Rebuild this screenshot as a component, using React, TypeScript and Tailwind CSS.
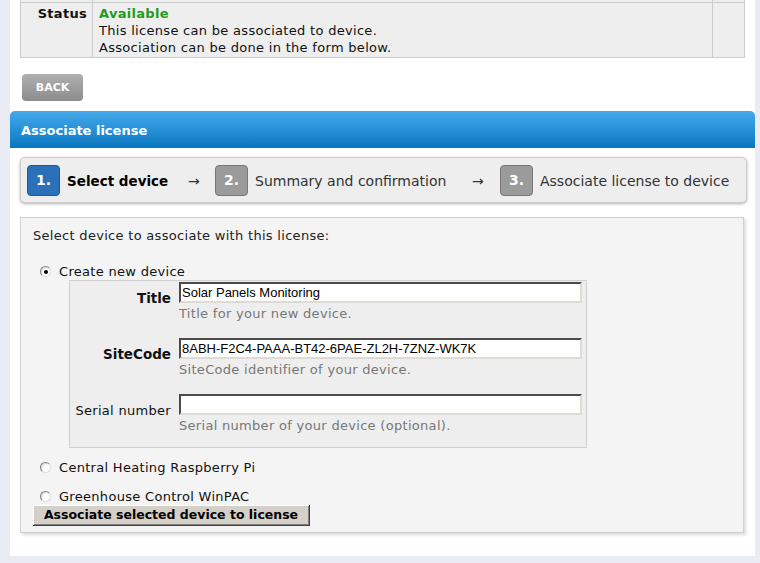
import React from "react";

function Radio({ checked }: { checked?: boolean }) {
  return (
    <span className="flex h-[11px] w-[11px] shrink-0 items-center justify-center rounded-full border border-t-[#7f7f7f] border-l-[#7f7f7f] border-r-[#dcdcdc] border-b-[#dcdcdc] bg-white shadow-[inset_1px_1px_1px_rgba(0,0,0,0.15)]">
      {checked && <span className="h-[4px] w-[4px] rounded-full bg-black" />}
    </span>
  );
}

function Field({
  label,
  bold,
  value,
  help,
  className,
}: {
  label: string;
  bold?: boolean;
  value: string;
  help: string;
  className?: string;
}) {
  return (
    <div className={"flex " + (className ?? "")}>
      <div
        className={
          "w-[101px] shrink-0 pt-[8px] text-right leading-[17px] " +
          (bold ? "text-[13.5px] font-bold tracking-normal" : "text-[13px]")
        }
      >
        {label}
      </div>
      <div className="ml-[8px]">
        <input
          readOnly
          value={value}
          className="block h-[21px] w-[403px] border-2 border-t-[#4a4a4a] border-l-[#4a4a4a] border-r-[#dedbd5] border-b-[#dedbd5] bg-white px-[1px] font-['Liberation_Sans',Arial,sans-serif] text-[13px] tracking-normal text-black outline-none"
        />
        <div className="mt-[2px] leading-[18px] text-[#777]">{help}</div>
      </div>
    </div>
  );
}

function Badge({ n, active }: { n: number; active?: boolean }) {
  return (
    <span
      className={
        "flex h-[31px] w-[33px] shrink-0 items-center justify-center rounded-[4px] border text-[14px] font-bold tracking-normal text-white " +
        (active ? "border-[#1d5a98] bg-[#2a71b9]" : "border-[#777] bg-[#9b9b9b]")
      }
    >
      {n}.
    </span>
  );
}

export default function App() {
  return (
    <div className="min-h-[563px] bg-[#e9ecf2] pl-[10px] pr-[5px] font-['DejaVu_Sans',Verdana,sans-serif] text-[13px] tracking-[0.3px] text-[#111]">
      <div className="min-h-[556px] bg-white pb-[22px]">
        <div className="px-[10px]">
          {/* license details table (tail) */}
          <div className="border-x border-[#ccc] bg-[#eee]">
            <div className="flex h-[2px]">
              <div className="w-[72px] border-r border-[#ccc]" />
              <div className="w-[620px] border-r border-[#ccc]" />
              <div className="flex-1" />
            </div>
            <div className="flex border-y border-[#ccc]">
              <div className="w-[72px] border-r border-[#ccc] pb-[1px] pr-[5px] pt-[2px] text-right font-bold leading-[17px]">
                Status
              </div>
              <div className="w-[620px] border-r border-[#ccc] pb-[1px] pl-[6px] pt-[2px] leading-[17px]">
                <div className="font-bold text-[#1e9c1e]">Available</div>
                <div>This license can be associated to device.</div>
                <div>Association can be done in the form below.</div>
              </div>
              <div className="flex-1" />
            </div>
          </div>

          <button className="ml-[2px] mt-[16px] flex h-[27px] w-[61px] items-center justify-center rounded-[4px] bg-gradient-to-b from-[#b0b0b0] to-[#8c8c8c] pt-[1px] text-[11px] font-bold tracking-normal text-white">
            BACK
          </button>
        </div>

        <div className="mt-[10px] flex h-[37px] items-center rounded-t-[5px] bg-gradient-to-b from-[#45a9eb] via-[#2791d8] to-[#0477be] pl-[11px] pt-[3px] text-[13px] font-bold tracking-normal text-white">
          Associate license
        </div>

        <div className="pl-[10px] pr-[8px]">
          <div className="mt-[9px] flex h-[46px] items-center rounded-[5px] border border-[#ccc] bg-[#eee] pl-[6px] pt-[1px] text-[14px] tracking-normal shadow-[0_1px_3px_rgba(0,0,0,0.3)]">
            <Badge n={1} active />
            <span className="ml-[7px] w-[121px] pt-[2px] text-[13.5px] font-bold text-black">Select device</span>
            <span className="w-[27px] pt-[2px] text-[#333]">→</span>
            <Badge n={2} />
            <span className="ml-[7px] w-[217px] pt-[2px] text-[#333]">Summary and confirmation</span>
            <span className="w-[28px] pt-[2px] text-[#333]">→</span>
            <Badge n={3} />
            <span className="ml-[7px] pt-[2px] text-[#333]">Associate license to device</span>
          </div>
        </div>

        <div className="pl-[10px] pr-[11px]">
          <div className="mt-[14px] border border-[#d0d0d0] bg-[#f4f4f4] pb-[6px] pl-[12px] pt-[9px] shadow-[2px_2px_3px_rgba(0,0,0,0.15)]">
            <div className="leading-[17px] text-[#222]">Select device to associate with this license:</div>

            <label className="mt-[19px] flex items-center gap-[8px] pl-[7px] leading-[17px]">
              <Radio checked />
              <span>Create new device</span>
            </label>

            <div className="ml-[36px] w-[518px] border border-[#cfcfcf] bg-[#eee] pb-[12px] pt-[1px]">
              <Field label="Title" bold value="Solar Panels Monitoring" help="Title for your new device." />
              <Field
                className="mt-[15px]"
                label="SiteCode"
                bold
                value="8ABH-F2C4-PAAA-BT42-6PAE-ZL2H-7ZNZ-WK7K"
                help="SiteCode identifier of your device."
              />
              <Field
                className="mt-[15px]"
                label="Serial number"
                value=""
                help="Serial number of your device (optional)."
              />
            </div>

            <label className="mt-[11px] flex items-center gap-[8px] pl-[7px] leading-[17px]">
              <Radio />
              <span>Central Heating Raspberry Pi</span>
            </label>
            <label className="mt-[12px] flex items-center gap-[8px] pl-[7px] leading-[17px]">
              <Radio />
              <span>Greenhouse Control WinPAC</span>
            </label>

            <button className="flex h-[21px] w-[277px] items-center justify-center border-r border-b border-r-[#404040] border-b-[#404040] bg-[#d4d0c8] text-[12.5px] font-bold tracking-normal text-black shadow-[inset_1px_1px_#fff,inset_-1px_-1px_#808080]">
              Associate selected device to license
            </button>
          </div>
        </div>
      </div>
    </div>
  );
}
